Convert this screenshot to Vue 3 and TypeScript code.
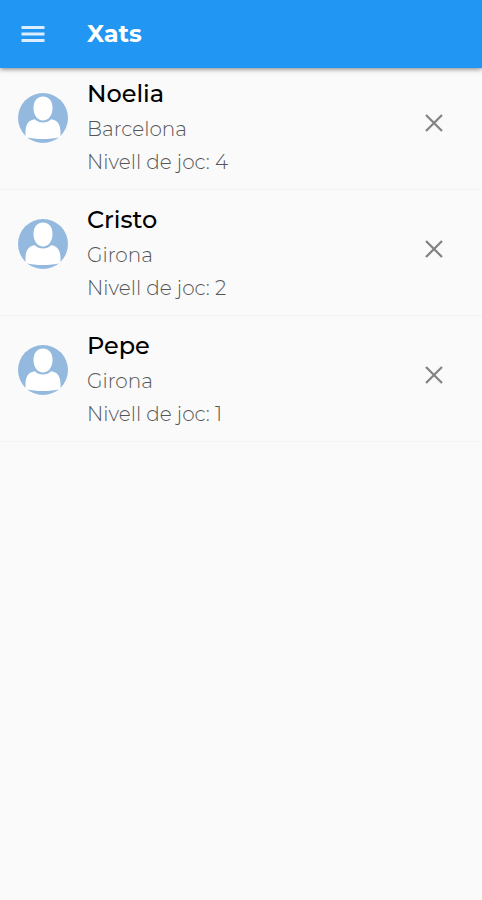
<script setup lang="ts">
import { ref } from 'vue'

interface Chat {
  id: number
  name: string
  city: string
  level: number
}

const chats = ref<Chat[]>([
  { id: 1, name: 'Noelia', city: 'Barcelona', level: 4 },
  { id: 2, name: 'Cristo', city: 'Girona', level: 2 },
  { id: 3, name: 'Pepe', city: 'Girona', level: 1 },
])

function removeChat(id: number): void {
  chats.value = chats.value.filter((chat) => chat.id !== id)
}
</script>

<template>
  <div class="page">
    <header class="toolbar">
      <button class="icon-button menu" type="button" aria-label="Menú">
        <svg width="24" height="18" viewBox="0 0 24 18" aria-hidden="true">
          <path d="M.5 2.500h23M.5 9h23M.5 15.500h23" stroke="currentColor" stroke-width="3" />
        </svg>
      </button>
      <h1 class="title">Xats</h1>
    </header>
    <main>
      <ul class="list">
        <li v-for="chat in chats" :key="chat.id" class="row">
          <svg class="avatar" viewBox="0 0 50 50" aria-hidden="true">
            <circle cx="25" cy="25" r="25" fill="#94b9df" />
            <path
              d="M25 27.500c-5.500 0-9.500-5.600-9.500-12.300C15.500 7.500 19.500 3.500 25 3.500s9.500 4 9.500 11.700c0 6.700-4 12.300-9.500 12.300z"
              fill="#fff"
            />
            <path
              d="M17 26.200c2.200 2.200 4.800 3.200 8 3.200s5.800-1 8-3.200c6.500.5 9.500 5.300 9.500 13v4.800C37 45.600 31 46 25 46S13 45.600 7.500 44v-4.800c0-7.700 3-12.500 9.500-13z"
              fill="#fff"
            />
          </svg>
          <div class="details">
            <h2 class="name">{{ chat.name }}</h2>
            <p class="line">{{ chat.city }}</p>
            <p class="line">Nivell de joc: {{ chat.level }}</p>
          </div>
          <button
            class="icon-button remove"
            type="button"
            :aria-label="`Elimina ${chat.name}`"
            @click="removeChat(chat.id)"
          >
            <svg width="18" height="18" viewBox="0 0 18 18" aria-hidden="true">
              <path d="M1 1l16 16M17 1L1 17" stroke="currentColor" stroke-width="2.2" />
            </svg>
          </button>
        </li>
      </ul>
    </main>
  </div>
</template>

<style>
body {
  margin: 0;
  background: #fafafa;
}
</style>

<style scoped>
.page {
  min-height: 100vh;
  background: #fafafa;
  color: #000;
  font-family: Montserrat, Inter, "Liberation Sans", sans-serif;
}

.toolbar {
  position: relative;
  z-index: 1;
  display: flex;
  align-items: center;
  gap: 29px;
  box-sizing: border-box;
  height: 68px;
  padding: 0 8px;
  background: #2196f3;
  color: #fff;
  box-shadow: 0 1px 5px rgba(0, 0, 0, 0.5);
}

.icon-button {
  display: flex;
  align-items: center;
  justify-content: center;
  padding: 0;
  border: 0;
  background: none;
  cursor: pointer;
}

.menu {
  width: 50px;
  height: 48px;
  color: #dceefd;
}

.title {
  margin: 0;
  font-size: 24px;
  line-height: 32px;
  font-weight: 700;
}

.list {
  margin: -4px 0 0;
  padding: 0;
  list-style: none;
}

.row {
  display: flex;
  align-items: flex-start;
  box-sizing: border-box;
  min-height: 126px;
  padding: 12px 24px 0 18px;
  border-bottom: 1px solid #f3f3f3;
}

.avatar {
  flex: none;
  width: 50px;
  height: 50px;
  margin: 17px 19px 0 0;
}

.details {
  flex: 1;
  min-width: 0;
}

.name {
  margin: 0 0 1px;
  font-size: 24px;
  line-height: 36px;
  font-weight: 500;
}

.line {
  margin: 0;
  color: #555;
  font-size: 20px;
  line-height: 33px;
  font-weight: 300;
}

.remove {
  width: 48px;
  height: 48px;
  margin-top: 23px;
  color: #828282;
}
</style>
